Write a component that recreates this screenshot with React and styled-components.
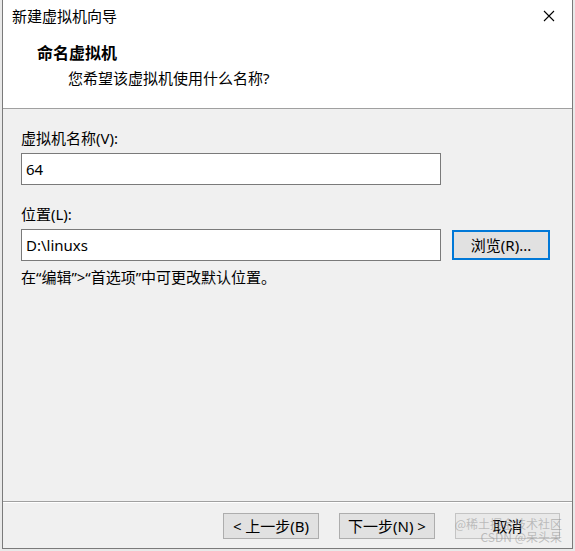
import styled, { createGlobalStyle } from 'styled-components';

const GlobalStyle = createGlobalStyle`
  html, body {
    margin: 0;
    padding: 0;
    background: #e9e9e9;
  }
  body {
    font-family: "Noto Sans", "Noto Sans CJK SC", sans-serif;
    font-size: 15px;
    color: #000;
  }
`;

const Window = styled.div`
  box-sizing: border-box;
  display: flex;
  flex-direction: column;
  width: 571px;
  height: 549px;
  margin-left: 2px;
  background: #f0f0f0;
  border: 1px solid #7a7a7a;
  border-top: none;
`;

const Top = styled.div`
  height: 108px;
  background: #fff;
  border-bottom: 1px solid #a0a0a0;
  display: flex;
  flex-direction: column;
`;

const TitleBar = styled.div`
  height: 33px;
  display: flex;
  align-items: center;
  justify-content: space-between;
  padding: 0 17px 0 9px;
`;

const Title = styled.span`
  line-height: 20px;
  margin-top: -1px;
`;

const CloseIcon = styled.svg`
  width: 12px;
  height: 12px;
  margin-top: -1px;
`;

const Heading = styled.div`
  margin: 10px 0 0 34px;
  font-weight: 700;
  font-size: 16px;
  line-height: 20px;
`;

const Subtitle = styled.div`
  margin: 5px 0 0 65px;
  line-height: 20px;
`;

const Body = styled.div`
  flex: 1;
  display: flex;
  flex-direction: column;
  padding: 19px 0 0 18px;
`;

const Label = styled.div`
  line-height: 20px;
  margin-top: ${(p) => p.$top || 0}px;
`;

const Row = styled.div`
  display: flex;
  align-items: center;
  gap: 11px;
  margin-top: 5px;
`;

const Field = styled.div`
  box-sizing: border-box;
  width: 420px;
  height: 32px;
  background: #fff;
  border: 1px solid #7a7a7a;
  padding: 0 4px;
  display: flex;
  align-items: center;
  line-height: 20px;
`;

const Hint = styled.div`
  line-height: 20px;
  margin-top: 6px;
`;

const Button = styled.div`
  box-sizing: border-box;
  width: ${(p) => p.$w || 96}px;
  height: ${(p) => p.$h || 26}px;
  background: ${(p) => (p.$faded ? '#e9e9e9' : '#e1e1e1')};
  border: ${(p) => (p.$focus ? '2px solid #0078d7' : p.$faded ? '1px solid #c4c4c4' : '1px solid #adadad')};
  display: flex;
  align-items: center;
  justify-content: center;
  line-height: 20px;
  white-space: nowrap;
`;

const Footer = styled.div`
  position: relative;
  height: 47px;
  border-top: 1px solid #a0a0a0;
  box-shadow: inset 0 1px 0 #ffffff;
  display: flex;
  justify-content: flex-end;
  align-items: flex-start;
  gap: 20px;
  padding: 11px 12px 0 0;
  box-sizing: border-box;
`;

const Watermark = styled.div`
  position: absolute;
  right: 10px;
  top: ${(p) => p.$top}px;
  font-size: 12px;
  line-height: 14px;
  color: rgba(140, 140, 140, 0.5);
  font-family: "Noto Sans CJK SC", sans-serif;
  white-space: nowrap;
  pointer-events: none;
`;

export default function App() {
  return (
    <>
      <GlobalStyle />
      <Window>
        <Top>
          <TitleBar>
            <Title>新建虚拟机向导</Title>
            <CloseIcon viewBox="0 0 12 12">
              <path d="M1 1 L11 11 M11 1 L1 11" stroke="#000" strokeWidth="1.1" fill="none" />
            </CloseIcon>
          </TitleBar>
          <Heading>命名虚拟机</Heading>
          <Subtitle>您希望该虚拟机使用什么名称?</Subtitle>
        </Top>
        <Body>
          <Label>虚拟机名称(V):</Label>
          <Row>
            <Field>64</Field>
          </Row>
          <Label $top={19}>位置(L):</Label>
          <Row>
            <Field>D:\linuxs</Field>
            <Button $focus $w={98} $h={30}>浏览(R)...</Button>
          </Row>
          <Hint>在“编辑”&gt;“首选项”中可更改默认位置。</Hint>
        </Body>
        <Footer>
          <Button>&lt; 上一步(B)</Button>
          <Button>下一步(N) &gt;</Button>
          <Button $faded $w={105}>取消</Button>
          <Watermark $top={15}>@稀土掘金技术社区</Watermark>
          <Watermark $top={28}>CSDN @呆头呆</Watermark>
        </Footer>
      </Window>
    </>
  );
}
